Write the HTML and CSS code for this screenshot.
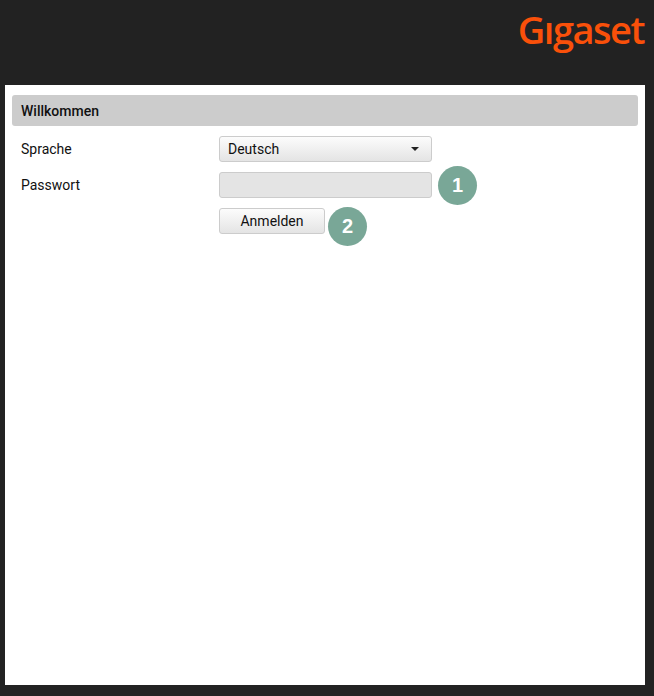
FILE: index.html
```html
<!DOCTYPE html>
<html lang="de">
<head>
    <meta charset="UTF-8">
    <meta name="viewport" content="width=device-width, initial-scale=1.0">
    <title>Gigaset</title>
    <link rel="stylesheet" href="styles.css">
</head>
<body>

<div class="top-bar">
    <div class="logo">Gıgaset</div>
</div>

<div class="panel">
    <div class="panel-title">Willkommen</div>

    <div class="form-row">
        <div class="form-label">Sprache</div>
        <div class="select-box">
            <span>Deutsch</span>
            <svg class="select-arrow" width="8" height="4" viewBox="0 0 8 4"><path d="M0 0h8L4 4z" fill="#222"/></svg>
        </div>
    </div>

    <div class="form-row">
        <div class="form-label">Passwort</div>
        <div class="control-wrap">
            <div class="password-box"></div>
            <div class="badge badge-password">1</div>
        </div>
    </div>

    <div class="form-row">
        <div class="form-label"></div>
        <div class="control-wrap">
            <div class="login-button">Anmelden</div>
            <div class="badge badge-login">2</div>
        </div>
    </div>
</div>

</body>
</html>
```

FILE: styles.css
```css
html, body {
    height: 100%;
}

body {
    font-family: Roboto, "Liberation Sans", sans-serif;
    font-size: 14px;
    color: #111;
    background-color: #222;
    margin: 0;
    padding: 0 9px 11px 5px;
    box-sizing: border-box;
    display: flex;
    flex-direction: column;
}

.top-bar {
    height: 85px;
    flex-shrink: 0;
    display: flex;
    justify-content: flex-end;
}

.logo {
    font-family: "Open Sans", sans-serif;
    font-size: 38px;
    font-weight: 600;
    line-height: 58px;
    letter-spacing: -1.5px;
    color: #f9500a;
    margin-right: 1px;
}

.panel {
    flex: 1;
    background-color: #fff;
    padding: 10px 7px;
}

.panel-title {
    height: 31px;
    line-height: 32px;
    padding-left: 9px;
    font-weight: 500;
    background-color: #ccc;
    border-radius: 3px;
    margin-bottom: 10px;
}

.form-row {
    display: flex;
    align-items: center;
    height: 26px;
    margin-bottom: 10px;
}

.form-label {
    width: 207px;
    padding-left: 9px;
    box-sizing: border-box;
}

.control-wrap {
    position: relative;
}

.select-box, .password-box, .login-button {
    box-sizing: border-box;
    height: 26px;
    border: 1px solid #ccc;
    border-radius: 3px;
}

.select-box {
    width: 213px;
    padding: 0 12px 0 8px;
    display: flex;
    align-items: center;
    justify-content: space-between;
    background: linear-gradient(#fcfcfc, #e4e4e4);
}

.password-box {
    width: 213px;
    background-color: #e4e4e4;
}

.login-button {
    width: 106px;
    line-height: 24px;
    text-align: center;
    background: linear-gradient(#fcfcfc, #e4e4e4);
}

.badge {
    position: absolute;
    width: 39px;
    height: 39px;
    border-radius: 50%;
    background-color: #79a797;
    color: #fff;
    font-family: "Liberation Sans", Arial, sans-serif;
    font-size: 20px;
    font-weight: bold;
    line-height: 39px;
    text-align: center;
}

.badge-password {
    left: 219px;
    top: -6px;
}

.badge-login {
    left: 109px;
    top: -1px;
}
```
